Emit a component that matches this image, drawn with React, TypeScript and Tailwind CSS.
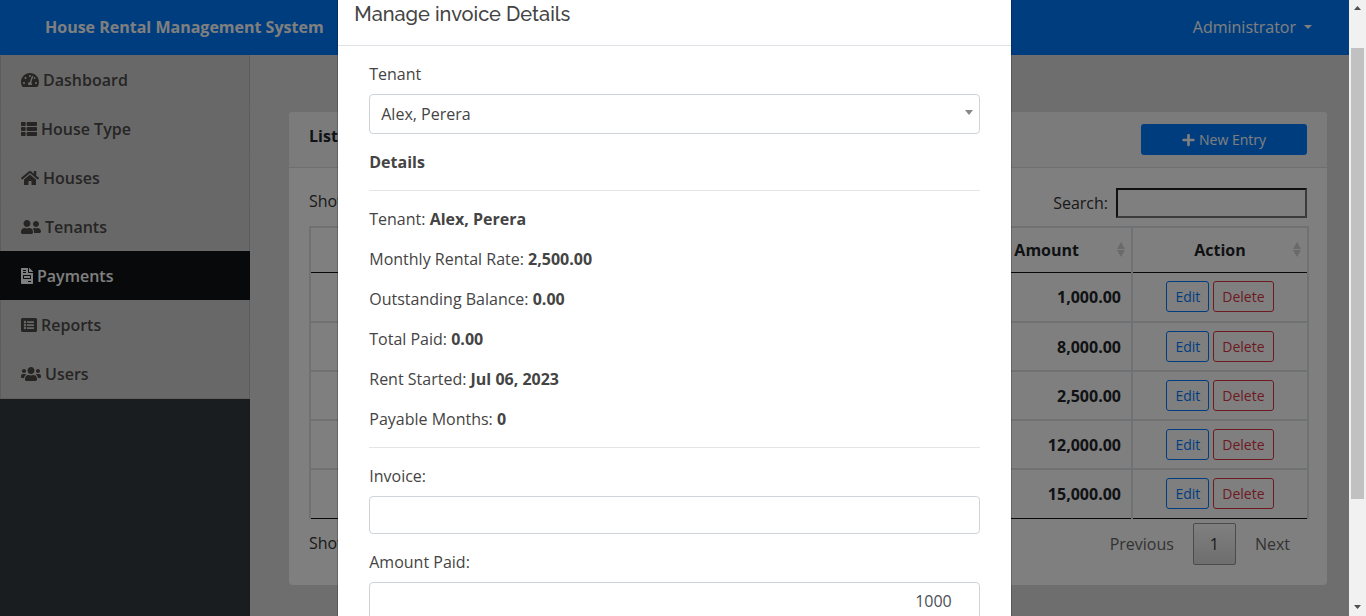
import type { ReactNode } from "react";
import {
  FaTachometerAlt,
  FaThList,
  FaHome,
  FaUserFriends,
  FaFileInvoice,
  FaListAlt,
  FaUsers,
  FaPlus,
} from "react-icons/fa";

const navItems: { label: string; icon: ReactNode; active?: boolean }[] = [
  { label: "Dashboard", icon: <FaTachometerAlt className="h-4 w-[18px]" /> },
  { label: "House Type", icon: <FaThList className="h-4 w-4" /> },
  { label: "Houses", icon: <FaHome className="h-4 w-[18px]" /> },
  { label: "Tenants", icon: <FaUserFriends className="h-4 w-5" /> },
  { label: "Payments", icon: <FaFileInvoice className="h-4 w-3" />, active: true },
  { label: "Reports", icon: <FaListAlt className="h-4 w-4" /> },
  { label: "Users", icon: <FaUsers className="h-4 w-5" /> },
];

const amounts = ["1,000.00", "8,000.00", "2,500.00", "12,000.00", "15,000.00"];

const details: [string, string][] = [
  ["Tenant:", "Alex, Perera"],
  ["Monthly Rental Rate:", "2,500.00"],
  ["Outstanding Balance:", "0.00"],
  ["Total Paid:", "0.00"],
  ["Rent Started:", "Jul 06, 2023"],
  ["Payable Months:", "0"],
];

function Caret({ className }: { className: string }) {
  return (
    <svg viewBox="0 0 8 4" preserveAspectRatio="none" className={className} aria-hidden="true">
      <path d="M0 0h8L4 4z" fill="currentColor" />
    </svg>
  );
}

function SortIcon() {
  return (
    <svg viewBox="0 0 8 15" className="h-[15px] w-2 shrink-0 text-[#d4d4d4]" aria-hidden="true">
      <path d="M0 7L4 0l4 7zM0 8h8l-4 7z" fill="currentColor" />
    </svg>
  );
}

function Navbar() {
  return (
    <header className="flex h-[55px] shrink-0 items-center justify-between bg-[#007bff] pr-[37px] pb-0.5 pl-[45px] text-white">
      <a href="#" className="font-bold">House Rental Management System</a>
      <button type="button" className="flex items-center gap-2">
        Administrator
        <Caret className="h-1 w-2" />
      </button>
    </header>
  );
}

function Sidebar() {
  return (
    <nav className="w-[250px] shrink-0 bg-[#343a40]">
      <ul className="border-b border-[#bebebe]">
        {navItems.map((item) => (
          <li key={item.label}>
            <a
              href="#"
              className={
                item.active
                  ? "flex h-[49px] items-center gap-1 border-x border-t border-[#101214] bg-[#101214] px-5 font-semibold text-white"
                  : "flex h-[49px] items-center gap-1 border-x border-t border-x-[#b8b8b8] border-t-[#cecece] bg-[#d1d1d1] px-5 font-semibold text-[#4c4b49]"
              }
            >
              {item.icon}
              {item.label}
            </a>
          </li>
        ))}
      </ul>
    </nav>
  );
}

function PaymentsCard() {
  return (
    <section className="rounded bg-white">
      <div className="flex h-14 items-center justify-between rounded-t border-b border-[#dfdfdf] bg-[#f7f7f7] px-5">
        <h1 className="pb-2 font-bold">List</h1>
        <button type="button" className="flex h-[31px] w-[166px] items-center justify-center gap-1 rounded-[3px] bg-[#007bff] text-sm text-white">
          <FaPlus className="h-3.5 w-[13px]" />
          New Entry
        </button>
      </div>
      <div className="p-5">
        <div className="flex items-start justify-between text-[#333]">
          <span className="pt-px">Show</span>
          <label className="flex items-center gap-2">
            Search:
            <input type="search" className="h-[30px] w-[191px] border-2 border-t-[#212121] border-r-[#767676] border-b-[#767676] border-l-[#212121]" />
          </label>
        </div>
        <div className="mt-2 -mr-0.5">
          <table className="w-full border-collapse border-2 border-b border-[#dee2e6] border-b-[#111]">
            <thead>
              <tr className="h-[45px] border-b border-[#111]">
                <th className="border-r-2 border-r-[#dee2e6]" />
                <th className="w-[140px] border-r-2 border-r-[#dee2e6] pr-1.5">
                  <div className="flex items-center justify-end gap-[38px]">
                    <span className="font-bold">Amount</span>
                    <SortIcon />
                  </div>
                </th>
                <th className="w-[176px] pr-1.5 pl-3.5">
                  <div className="flex items-center">
                    <span className="flex-1 text-center font-bold">Action</span>
                    <SortIcon />
                  </div>
                </th>
              </tr>
            </thead>
            <tbody>
              {amounts.map((amount) => (
                <tr key={amount} className="h-[49px] border-b-2 border-[#dee2e6] first:h-[50px] last:border-b last:border-[#111]">
                  <td className="border-r-2 border-r-[#dee2e6]" />
                  <td className="border-r-2 border-r-[#dee2e6] pr-2.5 text-right font-bold">{amount}</td>
                  <td>
                    <div className="flex justify-center gap-1 text-sm">
                      <button type="button" className="h-[31px] rounded-[3px] border border-[#007bff] px-2 text-[#007bff]">Edit</button>
                      <button type="button" className="h-[31px] rounded-[3px] border border-[#dc3545] px-2 text-[#dc3545]">Delete</button>
                    </div>
                  </td>
                </tr>
              ))}
            </tbody>
          </table>
        </div>
        <div className="flex justify-between pt-1 text-[#333]">
          <span className="pt-2">Show</span>
          <div className="flex items-center text-[#666]">
            <button type="button" className="px-4">Previous</button>
            <button type="button" className="mx-[3px] h-[42px] w-[43px] rounded-[2px] border border-[#979797] bg-linear-to-b from-white to-[#dcdcdc] text-[#333]">1</button>
            <button type="button" className="pr-[17px] pl-4">Next</button>
          </div>
        </div>
      </div>
    </section>
  );
}

function InvoiceDialog() {
  return (
    <div role="dialog" aria-labelledby="dialog-title" className="mx-auto h-full w-1/2 overflow-hidden border-x border-black/20 bg-white bg-clip-padding text-[#444]">
      <div className="flex h-[46px] items-start border-b border-[#dee2e6] px-4">
        <h2 id="dialog-title" className="font-['Raleway','Lato',sans-serif] text-xl leading-7 font-medium">Manage invoice Details</h2>
      </div>
      <form className="px-[31px] pt-4">
        <label htmlFor="tenant" className="block">Tenant</label>
        <div className="relative mt-2">
          <select id="tenant" className="h-10 w-full appearance-none rounded border border-[#ced4da] bg-white px-[11px] text-[#444]">
            <option>Alex, Perera</option>
          </select>
          <Caret className="pointer-events-none absolute top-4 right-[7px] h-[5px] w-2 text-[#888]" />
        </div>
        <h3 className="mt-4 font-bold">Details</h3>
        <hr className="my-4 border-[#e5e5e5]" />
        <div className="flex flex-col gap-4">
          {details.map(([name, value]) => (
            <p key={name}>
              {name} <b>{value}</b>
            </p>
          ))}
        </div>
        <hr className="my-4 border-[#e5e5e5]" />
        <label htmlFor="invoice" className="block">Invoice:</label>
        <input id="invoice" type="text" className="mt-2 h-[38px] w-full rounded border border-[#ced4da] px-3" />
        <label htmlFor="amount" className="mt-4 block">Amount Paid:</label>
        <input id="amount" type="text" defaultValue="1000" className="mt-2 h-[38px] w-full rounded border border-[#ced4da] pr-[27px] text-right text-[#495057]" />
      </form>
    </div>
  );
}

function Scrollbar() {
  return (
    <div aria-hidden="true" className="flex w-[17px] shrink-0 flex-col items-center bg-[#f1f1f1] text-[#505050]">
      <div className="flex h-12 shrink-0 pt-1.5">
        <Caret className="h-1 w-[7px] rotate-180" />
      </div>
      <div className="w-[13px] flex-1 bg-[#c1c1c1]" />
      <div className="flex h-[117px] shrink-0 items-end pb-[7px]">
        <Caret className="h-1 w-[7px]" />
      </div>
    </div>
  );
}

export default function App() {
  return (
    <div className="flex h-screen overflow-hidden font-['Open_Sans',sans-serif] text-base leading-6">
      <div className="relative flex min-w-0 flex-1 flex-col">
        <Navbar />
        <div className="flex min-h-0 flex-1">
          <Sidebar />
          <main className="min-w-0 flex-1 bg-[#dcdcdc] pt-[57px] pr-[22px] pl-[39px] text-[#212529]">
            <PaymentsCard />
          </main>
        </div>
        <div className="absolute inset-0 bg-black/50">
          <InvoiceDialog />
        </div>
      </div>
      <Scrollbar />
    </div>
  );
}
